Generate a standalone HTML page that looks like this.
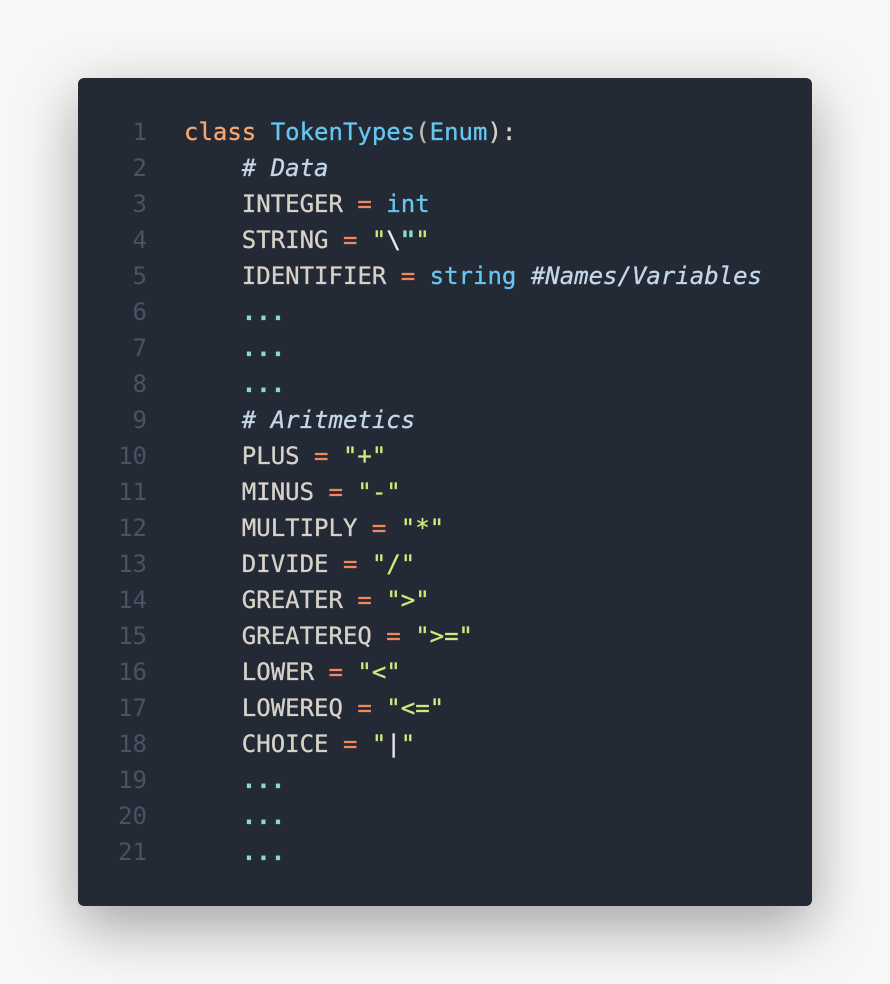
<!DOCTYPE html>
<html><head><meta charset="utf-8"><style>
html,body{margin:0;padding:0;width:890px;height:984px;background:#f7f7f7;overflow:hidden}
.card{position:absolute;left:78px;top:78px;width:734px;height:828px;background:#232935;border-radius:6px;box-shadow:0 20px 60px rgba(0,0,0,0.35)}
.l{position:absolute;left:0;height:36px;line-height:36px;font-family:"DejaVu Sans Mono","Liberation Mono",monospace;font-size:24px;white-space:pre;color:#d6d2c8;-webkit-text-stroke:0.3px}
.n{position:absolute;right:665px;text-align:right;color:#4b5261;-webkit-text-stroke:0}
.c{position:absolute;left:106px}
.k{color:#f9a66c}.b{color:#66c6ef}.o{color:#f0895e}.s{color:#c9ec7c}.e{color:#e8e8e8}.q{color:#89dcc4;font-weight:bold}.m{color:#c4d6ea;font-style:italic}.p{color:#bfbab0}
</style></head><body><div class="card">
<div class="l" style="top:36px;width:734px"><span class="n">1</span><span class="c"><span class="k">class</span> <span class="b">TokenTypes</span><span class="p">(</span><span class="b">Enum</span>):</span></div>
<div class="l" style="top:72px;width:734px"><span class="n">2</span><span class="c">    <span class="m"># Data</span></span></div>
<div class="l" style="top:108px;width:734px"><span class="n">3</span><span class="c">    INTEGER <span class="o">=</span> <span class="b">int</span></span></div>
<div class="l" style="top:144px;width:734px"><span class="n">4</span><span class="c">    STRING <span class="o">=</span> <span class="s">"</span><span class="e">\</span><span class="q">"</span><span class="s">"</span></span></div>
<div class="l" style="top:180px;width:734px"><span class="n">5</span><span class="c">    IDENTIFIER <span class="o">=</span> <span class="b">string</span> <span class="m">#Names/Variables</span></span></div>
<div class="l" style="top:216px;width:734px"><span class="n">6</span><span class="c">    <span class="q">...</span></span></div>
<div class="l" style="top:252px;width:734px"><span class="n">7</span><span class="c">    <span class="q">...</span></span></div>
<div class="l" style="top:288px;width:734px"><span class="n">8</span><span class="c">    <span class="q">...</span></span></div>
<div class="l" style="top:324px;width:734px"><span class="n">9</span><span class="c">    <span class="m"># Aritmetics</span></span></div>
<div class="l" style="top:360px;width:734px"><span class="n">10</span><span class="c">    PLUS <span class="o">=</span> <span class="s">"+"</span></span></div>
<div class="l" style="top:396px;width:734px"><span class="n">11</span><span class="c">    MINUS <span class="o">=</span> <span class="s">"-"</span></span></div>
<div class="l" style="top:432px;width:734px"><span class="n">12</span><span class="c">    MULTIPLY <span class="o">=</span> <span class="s">"*"</span></span></div>
<div class="l" style="top:468px;width:734px"><span class="n">13</span><span class="c">    DIVIDE <span class="o">=</span> <span class="s">"/"</span></span></div>
<div class="l" style="top:504px;width:734px"><span class="n">14</span><span class="c">    GREATER <span class="o">=</span> <span class="s">"&gt;"</span></span></div>
<div class="l" style="top:540px;width:734px"><span class="n">15</span><span class="c">    GREATEREQ <span class="o">=</span> <span class="s">"&gt;="</span></span></div>
<div class="l" style="top:576px;width:734px"><span class="n">16</span><span class="c">    LOWER <span class="o">=</span> <span class="s">"&lt;"</span></span></div>
<div class="l" style="top:612px;width:734px"><span class="n">17</span><span class="c">    LOWEREQ <span class="o">=</span> <span class="s">"&lt;="</span></span></div>
<div class="l" style="top:648px;width:734px"><span class="n">18</span><span class="c">    CHOICE <span class="o">=</span> <span class="s">"</span><span class="e">|</span><span class="s">"</span></span></div>
<div class="l" style="top:684px;width:734px"><span class="n">19</span><span class="c">    <span class="q">...</span></span></div>
<div class="l" style="top:720px;width:734px"><span class="n">20</span><span class="c">    <span class="q">...</span></span></div>
<div class="l" style="top:756px;width:734px"><span class="n">21</span><span class="c">    <span class="q">...</span></span></div>
</div></body></html>
